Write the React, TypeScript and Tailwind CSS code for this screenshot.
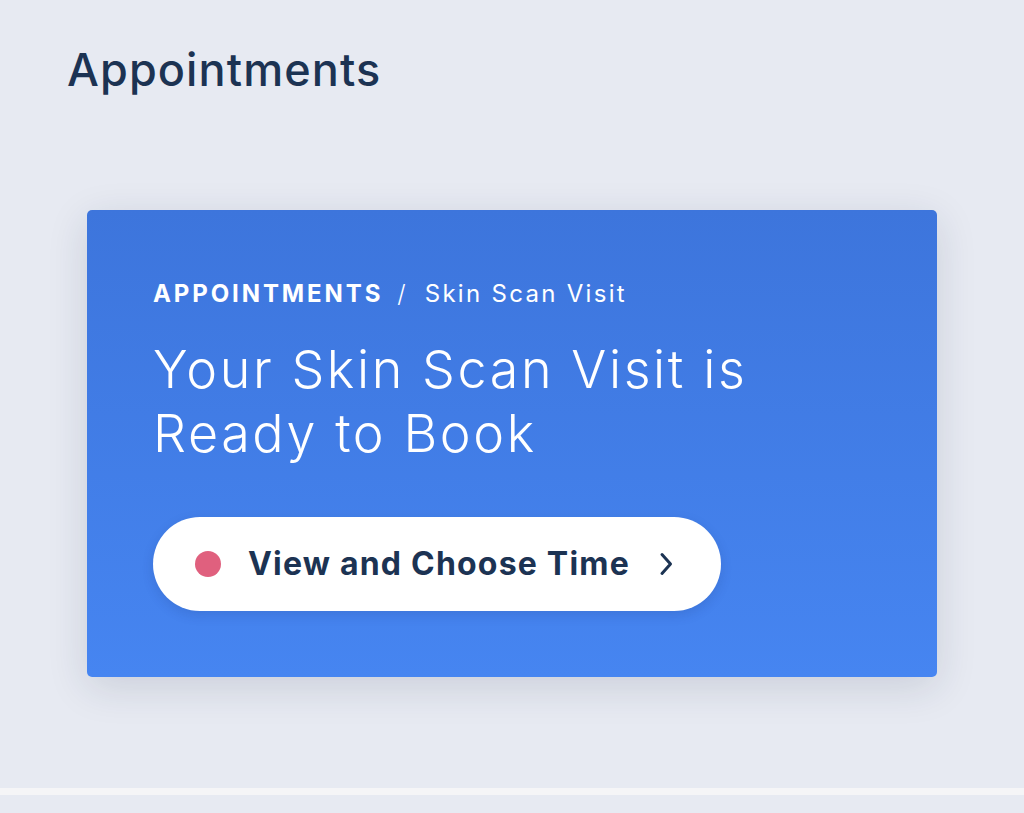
import React from "react";

export default function App() {
  return (
    <div
      className="w-full h-[813px] bg-[#e7eaf2] flex flex-col overflow-hidden"
      style={{ fontFamily: "Inter, 'Noto Sans', sans-serif" }}
    >
      <div className="pl-[67px] pt-[44px] h-[210px] shrink-0">
        <h1 className="text-[45px] leading-[52px] font-medium text-[#1c3353] tracking-[1.1px]">
          Appointments
        </h1>
      </div>
      <div className="px-[87px] h-[467px] shrink-0">
        <div className="h-full rounded-[5px] bg-gradient-to-b from-[#3d75dc] to-[#4685f1] shadow-[0_10px_40px_rgba(30,40,70,0.14)] px-[66px] pt-[70px]">
          <div className="flex items-center text-white text-[24px] leading-[28px]">
            <span className="font-bold tracking-[2.9px]">APPOINTMENTS</span>
            <span className="ml-[14px] mr-[19px] font-light">/</span>
            <span className="font-normal tracking-[2.3px]">Skin Scan Visit</span>
          </div>
          <div className="mt-[30px] text-white text-[52px] leading-[64px] font-light tracking-[2.6px]">
            Your Skin Scan Visit is
            <br />
            Ready to Book
          </div>
          <div className="mt-[51px] w-[568px] h-[94px] rounded-full bg-white flex items-center pl-[42px] shadow-[0_4px_12px_rgba(20,40,100,0.15)]">
            <span className="w-[26px] h-[26px] rounded-full bg-[#e0607e] shrink-0" />
            <span className="ml-[27px] text-[32px] font-bold text-[#1c3353] tracking-[1.2px]">
              View and Choose Time
            </span>
            <svg
              className="ml-[28px]"
              width="16"
              height="26"
              viewBox="0 0 16 26"
              fill="none"
              stroke="#1c3353"
              strokeWidth="3"
              strokeLinecap="round"
              strokeLinejoin="round"
            >
              <path d="M4 3.5 L12.5 13 L4 22.5" />
            </svg>
          </div>
        </div>
      </div>
      <div className="h-[111px] shrink-0" />
      <div className="h-[7px] bg-[#f5f5f7] shrink-0" />
      <div className="flex-1" />
    </div>
  );
}
